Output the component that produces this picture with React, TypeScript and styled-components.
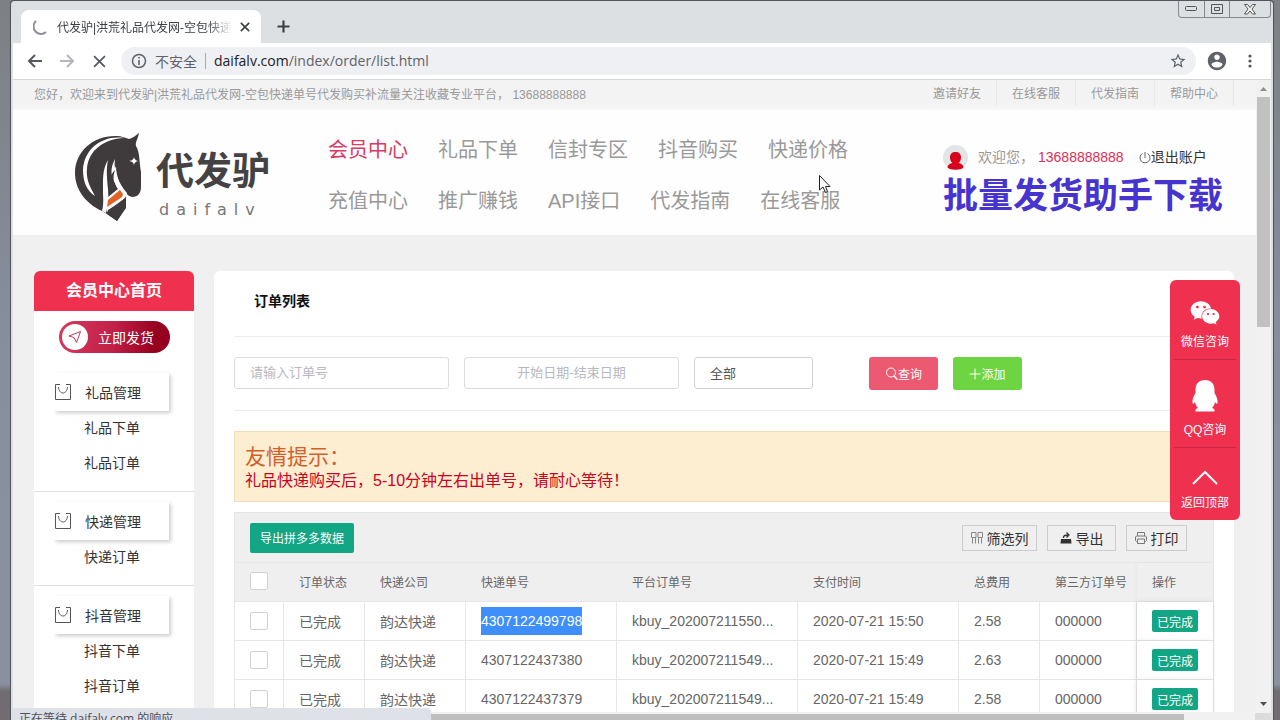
import React from "react";
import styled, { createGlobalStyle } from "styled-components";
import { FaWeixin } from "react-icons/fa";

const sans = `"Liberation Sans", "Noto Sans CJK SC", sans-serif`;
const ui = `"Open Sans", "Noto Sans CJK SC", sans-serif`;

const Global = createGlobalStyle`
  *, *::before, *::after { box-sizing: border-box; }
  html, body, #root { height: 100%; }
  body { margin: 0; font-family: ${sans}; font-size: 14px; color: #666; overflow: hidden; }
  a { color: inherit; text-decoration: none; }
  button, input, select { font-family: inherit; margin: 0; }
  button { cursor: pointer; padding: 0; border: 0; background: none; color: inherit; }
  h1, h2, p, ul { margin: 0; padding: 0; list-style: none; font-weight: normal; }
  svg { display: block; flex: none; }
`;

const Desktop = styled.div`
  height: 100%;
  padding: 1px 6px 0 10px;
  background: linear-gradient(180deg, #7d8084 0, #878f9f 50%, #8a90a0 95%, #706c72 96%);
`;

const BrowserWindow = styled.div`
  position: relative;
  height: 100%;
  display: flex;
  flex-direction: column;
  border: solid #4f5259;
  border-width: 0 1px;
  border-radius: 4px 4px 0 0;
  padding: 0 2px;
  background: #dde0e3;
  box-shadow: 0 -1px 0 #55555b;
  overflow: hidden;
`;

const TitleBar = styled.div`
  flex: none;
  height: 42px;
  display: flex;
  align-items: flex-end;
  padding-left: 8px;
`;

const Tab = styled.div`
  width: 240px;
  height: 33px;
  display: flex;
  align-items: center;
  gap: 8px;
  padding: 0 11px 0 12px;
  border-radius: 8px 8px 0 0;
  background: #fff;
  color: #3c4043;
  font-size: 12px;
`;

const TabTitle = styled.span`
  flex: 1;
  white-space: nowrap;
  mask-image: linear-gradient(90deg, #000 86%, transparent);
`;

const NewTab = styled.button`
  width: 24px;
  height: 33px;
  margin-left: 10px;
  display: grid;
  place-items: center;
  color: #3c4043;
`;

const WindowButtons = styled.div`
  display: flex;
  align-self: flex-start;
  height: 17px;
  margin-left: auto;
  border: 1px solid #85888c;
  border-top: 0;
  border-radius: 0 0 4px 4px;
`;

const WindowButton = styled.button<{ $wide?: boolean }>`
  width: ${(p) => (p.$wide ? 41 : 25)}px;
  display: grid;
  place-items: center;
  & + & { border-left: 1px solid #85888c; }
`;

const ToolBar = styled.div`
  flex: none;
  height: 37px;
  display: flex;
  align-items: center;
  gap: 12px;
  padding: 0 11px 0 12px;
  background: #fff;
  border-bottom: 1px solid #d6d7da;
  color: #5f6368;
`;

const ToolButton = styled.button<{ $faint?: boolean }>`
  width: 20px;
  height: 20px;
  display: grid;
  place-items: center;
  color: ${(p) => (p.$faint ? "#b4b6b9" : "#55585c")};
`;

const AddressBar = styled.div`
  flex: 1;
  height: 28px;
  display: flex;
  align-items: center;
  gap: 8px;
  margin-right: -2px;
  padding: 0 9px 0 10px;
  border-radius: 14px;
  background: #eff0f4;
  font-size: 14px;
`;

const Address = styled.div`
  flex: 1;
  padding-left: 8px;
  border-left: 1px solid #a9abaf;
  font-family: ${ui};
  line-height: 16px;
  color: #5f6368;
  b { font-weight: normal; color: #202124; }
`;

const View = styled.div`
  position: relative;
  flex: 1;
  min-height: 0;
  display: flex;
`;

const Page = styled.div`
  flex: 1;
  min-width: 0;
  overflow: hidden;
  background: #f0f0f0;
`;

const ScrollTrack = styled.div`
  width: 15px;
  flex: none;
  display: flex;
  flex-direction: column;
  align-items: center;
  justify-content: space-between;
  padding: 7px 0 5px;
  background: #f1f1f1;
`;

const ScrollThumb = styled.div`
  width: 13px;
  height: 230px;
  margin: 5px 0 auto;
  background: #c1c1c1;
`;

const BottomTrack = styled.div`
  flex: none;
  height: 8px;
  display: flex;
  padding-top: 1px;
  background: #f1f1f1;
`;

const BottomThumb = styled.div`
  flex: 1;
  margin: 1px 71px 0 13px;
  background: #bfbfbf;
`;

const Corner = styled.div`
  width: 16px;
  background: #dcdcdc;
`;

const TopBar = styled.div`
  height: 30px;
  display: flex;
  align-items: center;
  justify-content: space-between;
  padding: 0 22px 0 21px;
  background: linear-gradient(180deg, #f3f3f3 0, #f3f3f3 80%, #f8f8f8 100%);
  color: #999;
  font-size: 12px;
  line-height: 28px;
  white-space: pre;
`;

const TopLinks = styled.nav`
  display: flex;
  height: 26px;
  align-self: flex-start;
  a { padding: 0 15px; border-right: 1px solid #e8e8e8; }
`;

const Header = styled.header`
  height: 125px;
  display: flex;
  align-items: flex-start;
  padding: 0 33px 0 62px;
  background: #fefefe;
`;

const Logo = styled.a`
  display: flex;
  width: 193px;
  gap: 14px;
  padding-top: 22px;
  color: #454243;
`;

const LogoText = styled.span`
  display: flex;
  flex-direction: column;
  font-size: 38px;
  line-height: 38px;
  font-weight: bold;
  padding-top: 20px;
  white-space: nowrap;
`;

const LogoLatin = styled.span`
  padding-left: 3px;
  font-family: "DejaVu Sans", sans-serif;
  font-weight: normal;
  font-size: 16px;
  line-height: 40px;
  letter-spacing: 7px;
  color: #777;
`;

const Nav = styled.nav`
  margin-left: 60px;
  padding-top: 13px;
`;

const NavRow = styled.div`
  display: flex;
  gap: 30px;
  height: 51px;
  align-items: center;
  white-space: nowrap;
`;

const NavLink = styled.a<{ $active?: boolean }>`
  font-size: 20px;
  color: ${(p) => (p.$active ? "#d83a62" : "#999")};
`;

const Account = styled.div`
  margin-left: auto;
  padding-top: 35px;
  white-space: nowrap;
`;

const Welcome = styled.div`
  display: flex;
  align-items: center;
  height: 25px;
  line-height: 23px;
  color: #999;
  a { display: flex; align-items: center; margin-left: 15px; color: #333; }
`;

const Greeting = styled.span`
  margin: 0 4px 0 10px;
`;

const Phone = styled.span`
  color: #dc3056;
`;

const Download = styled.a`
  display: block;
  color: #4634d0;
  font-size: 35px;
  font-weight: bold;
  line-height: 52px;
`;

const Columns = styled.div`
  display: flex;
  align-items: stretch;
  gap: 20px;
  padding: 36px 22px 0 21px;
`;

const Sidebar = styled.aside`
  width: 160px;
  flex: none;
  background: #fff;
  border-radius: 6px 6px 0 0;
  overflow: hidden;
  color: #333;
`;

const SideTitle = styled.h2`
  height: 40px;
  background: #f0304f;
  color: #fff;
  font-size: 16px;
  font-weight: bold;
  line-height: 40px;
  text-align: center;
`;

const ShipButton = styled.button`
  display: flex;
  align-items: center;
  gap: 10px;
  width: 111px;
  height: 32px;
  margin: 10px 25px;
  padding: 0 3px;
  border-radius: 16px;
  background: linear-gradient(100deg, #d83a60 0, #c01f46 50%, #96001f 85%);
  color: #fff;
  font-size: 14px;
`;

const Round = styled.span`
  width: 26px;
  height: 26px;
  border-radius: 50%;
  display: grid;
  place-items: center;
  background: #fff;
`;

const SideGroup = styled.section`
  padding: 10px 0;
  & + & { border-top: 1px solid #dfe0e1; }
`;

const GroupHead = styled.h2`
  display: flex;
  align-items: center;
  gap: 14px;
  height: 38px;
  margin: 0 25px 0 20px;
  font-size: 14px;
  background: #fff;
  box-shadow: 2px 2px 4px rgba(0, 0, 0, 0.2);
  clip-path: inset(-4px -8px -8px 0);
`;

const SideLink = styled.a`
  display: block;
  height: 35px;
  padding-left: 50px;
  line-height: 35px;
`;

const Main = styled.main`
  flex: 1;
  min-width: 0;
  padding: 0 20px;
  background: #fff;
  border-radius: 6px 6px 0 0;
`;

const PanelTitle = styled.h1`
  height: 66px;
  padding-left: 20px;
  border-bottom: 1px solid #eee;
  color: #111;
  font-size: 14px;
  font-weight: bold;
  line-height: 60px;
`;

const Filters = styled.form`
  display: flex;
  align-items: flex-start;
  gap: 15px;
  padding: 20px 0;
  border-bottom: 1px solid #eee;
`;

const Field = styled.input<{ $center?: boolean }>`
  width: 215px;
  height: 32px;
  padding: 0 15px 2px;
  border: 1px solid #dcdcdc;
  border-radius: 3px;
  background: #fff;
  font-size: 13px;
  text-align: ${(p) => (p.$center ? "center" : "left")};
  &::placeholder { color: #b8b8c0; }
`;

const Choice = styled.select`
  appearance: none;
  width: 119px;
  height: 32px;
  padding: 0 15px;
  border: 1px solid #d2d2d2;
  border-radius: 3px;
  background: #fff;
  color: #555;
  font-size: 13px;
`;

const Actions = styled.div`
  display: flex;
  gap: 15px;
  margin-left: 41px;
`;

const ActionButton = styled.button<{ $tone: string }>`
  display: flex;
  align-items: center;
  justify-content: center;
  width: 69px;
  height: 33px;
  border-radius: 3px;
  background: ${(p) => p.$tone};
  color: #fff;
  font-size: 12px;
`;

const Notice = styled.section`
  margin: 20px 0 10px;
  padding: 12px 10px 9px;
  border: 1px solid #f1dcb8;
  background: #fdedd1;
  color: #cc0022;
  font-size: 16px;
  line-height: 22px;
`;

const NoticeTitle = styled.h2`
  color: #d0602c;
  font-size: 21px;
  line-height: 26px;
`;

const TableBox = styled.div`
  border: 1px solid #e4e4e4;
`;

const TableTools = styled.div`
  display: flex;
  align-items: center;
  gap: 10px;
  height: 50px;
  padding: 0 26px 0 15px;
  background: #f0eff0;
  border-bottom: 1px solid #e8e8e8;
`;

const ExportButton = styled.button`
  width: 104px;
  height: 30px;
  margin-right: auto;
  border-radius: 2px;
  background: #12a685;
  color: #fff;
  font-size: 12px;
`;

const ToolChip = styled.button<{ $w: number }>`
  display: flex;
  align-items: center;
  justify-content: center;
  gap: 4px;
  width: ${(p) => p.$w}px;
  height: 26px;
  border: 1px solid #ccc;
  color: #333;
  font-size: 14px;
`;

const Table = styled.table`
  width: 100%;
  table-layout: fixed;
  border-collapse: separate;
  border-spacing: 0;
`;

const Cell = styled.td`
  height: 39px;
  padding: 0 15px;
  border-bottom: 1px solid #e6e6e6;
  border-right: 1px solid #e6e6e6;
  background: #fff;
  white-space: nowrap;
  text-align: left;
  font-size: 14px;
  &:last-child { border-right: 0; box-shadow: -1px 0 5px rgba(0, 0, 0, 0.1); }
`;

const HeadCell = styled(Cell)`
  padding-bottom: 2px;
  font-size: 12px;
  font-weight: normal;
  background: #f0eff0;
  border-right-color: #f0eff0;
  &:last-child { box-shadow: -1px 0 5px rgba(0, 0, 0, 0.04); }
`;

const Check = styled.input`
  appearance: none;
  display: block;
  width: 18px;
  height: 18px;
  margin: 0;
  border: 1px solid #d2d2d2;
  border-radius: 2px;
  background: #fff;
`;

const Selected = styled.span`
  display: inline-block;
  line-height: 28px;
  vertical-align: middle;
  background: #3e8ffb;
  color: #fff;
`;

const Done = styled.button`
  display: block;
  width: 46px;
  height: 22px;
  border-radius: 2px;
  background: #12a685;
  color: #fff;
  font-size: 12px;
`;

const Floating = styled.nav`
  position: absolute;
  top: 200px;
  right: 31px;
  width: 70px;
  padding: 0 4px;
  border-radius: 6px;
  background: #f0304f;
`;

const FloatLink = styled.a<{ $h: number; $gap: number }>`
  display: flex;
  flex-direction: column;
  align-items: center;
  justify-content: flex-end;
  gap: ${(p) => p.$gap}px;
  height: ${(p) => p.$h}px;
  padding-bottom: 8px;
  color: #fff;
  font-size: 12px;
  line-height: 18px;
  white-space: nowrap;
  & + & { border-top: 1px solid #c92843; }
`;

const StatusBubble = styled.div`
  position: absolute;
  left: 2px;
  bottom: 0;
  width: 418px;
  height: 12px;
  padding: 1px 6px;
  border-radius: 0 4px 0 0;
  background: #dfe1e8;
  color: #4d5056;
  font-family: ${ui};
  font-size: 12px;
  line-height: 20px;
  white-space: nowrap;
`;

const Pointer = styled.svg`
  position: absolute;
  left: 808px;
  top: 174px;
`;

const line = { fill: "none", stroke: "currentColor" } as const;

const Horse = () => (
  <svg width="67" height="90" viewBox="0 0 67 90" aria-hidden="true">
    <path fill="#3f3b3c" d="M64 1C63 7 60 10 61 14C65 20 64 30 66 40L66 55C66 61 63 65 57 65C53 64 51 61 47 57C44 50 41 42 41 34C37 42 39 49 42 57L51 65L51 75L42 89L32 82L27 79C10 71 0 57 0 41C0 19 19 3 42 4C47 4 50 6 54 7C58 6 61 3 64 1Z" />
    <path fill="#fff" d="M49 6C27 3 9 17 8 38C8 50 12 59 20 64C14 53 11 47 12 36C14 18 29 7 49 6Z" />
    <path fill="#fff" d="M33 28C27 38 28 49 28 58C28 66 29 72 27 79L31 81C33 73 34 66 33 57C32 47 31 37 33 28Z" />
    <path fill="#fff" d="M40 27C33 40 38 49 43 56L31 67L32 80L50 66L52 61C44 52 38 39 40 27Z" />
    <path fill="#3f3b3c" d="M40 38C37 46 39 52 43 57L34 64C33 52 34 44 40 38Z" />
    <path fill="#e16324" d="M45 58L48 62L47 65L32 75L33 68Z" />
    <path fill="#3f3b3c" d="M33 78L50 67L51 76L42 89L32 82Z" />
    <circle fill="#fff" cx="59" cy="29" r="2" />
    <path fill="#fff" d="M59 25l1 3 3 1-3 1-1 3-1-3-4-1 4-1z" />
  </svg>
);

const Spinner = () => (
  <svg width="16" height="16" viewBox="0 0 16 16" aria-hidden="true">
    <path {...line} stroke="#8d9094" strokeWidth="2" d="M3 2A7 7 0 0 0 13 13" />
  </svg>
);
const Cross = ({ size, weight }: { size: number; weight: number }) => (
  <svg width={size} height={size} viewBox="0 0 12 12" aria-hidden="true">
    <path {...line} strokeWidth={weight} d="M1 1L11 11M11 1L1 11" />
  </svg>
);
const Arrow = ({ flip }: { flip?: boolean }) => (
  <svg width="16" height="16" viewBox="0 0 16 16" aria-hidden="true">
    <path {...line} strokeWidth="2" d={flip ? "M1 8H14M8 2L14 8L8 14" : "M15 8H2M8 2L2 8L8 14"} />
  </svg>
);
const Info = () => (
  <svg width="16" height="16" viewBox="0 0 16 16" aria-hidden="true">
    <circle {...line} strokeWidth="1.5" cx="8" cy="8" r="6.5" />
    <path {...line} strokeWidth="1.6" d="M8 7V12M8 4V5.6" />
  </svg>
);
const Star = () => (
  <svg width="18" height="18" viewBox="0 0 24 24" aria-hidden="true">
    <path fill="currentColor" d="M22 9.24l-7.19-.62L12 2 9.19 8.63 2 9.24l5.46 4.73L5.82 21 12 17.27 18.18 21l-1.63-7.03L22 9.24zM12 15.4l-3.76 2.27 1-4.28-3.32-2.88 4.38-.38L12 6.1l1.71 4.04 4.38.38-3.32 2.88 1 4.28L12 15.4z" />
  </svg>
);
const Profile = () => (
  <svg width="22" height="22" viewBox="0 0 24 24" aria-hidden="true">
    <path fill="currentColor" d="M12 2C6.48 2 2 6.48 2 12s4.48 10 10 10 10-4.48 10-10S17.52 2 12 2zm0 3c1.66 0 3 1.34 3 3s-1.34 3-3 3-3-1.34-3-3 1.34-3 3-3zm0 14.2c-2.5 0-4.71-1.28-6-3.22.03-1.99 4-3.08 6-3.08 1.99 0 5.97 1.09 6 3.08-1.29 1.94-3.5 3.22-6 3.22z" />
  </svg>
);
const Dots = () => (
  <svg width="4" height="16" viewBox="0 0 4 16" aria-hidden="true">
    <g fill="currentColor"><circle cx="2" cy="3" r="1.6" /><circle cx="2" cy="8" r="1.6" /><circle cx="2" cy="13" r="1.6" /></g>
  </svg>
);
const Avatar = () => (
  <svg width="25" height="25" viewBox="0 0 25 25" aria-hidden="true">
    <circle cx="12.5" cy="12.5" r="12.5" fill="#e2e5e5" />
    <path fill="#d8001b" d="M12.5 7C16 7 18 9 18 12.5C18 15 17 17 15.500 18C18 18.500 20.500 20 20.500 22.500C18 25.500 7 25.500 4.500 22.500C4.500 20 7 18.500 9.500 18C8 17 7 15 7 12.500C7 9 9 7 12.500 7Z" />
  </svg>
);
const Power = () => (
  <svg width="12" height="14" viewBox="0 0 12 14" aria-hidden="true">
    <path {...line} stroke="#666" d="M3.500 2.500A5 5 0 1 0 8.500 2.500M6 1V7" />
  </svg>
);
const Plane = () => (
  <svg width="14" height="14" viewBox="0 0 14 14" aria-hidden="true">
    <path {...line} stroke="#c03a5c" strokeLinejoin="round" d="M12.500 1.500L1 6L6 7.500L8.500 12.500Z" />
  </svg>
);
const Bag = () => (
  <svg width="17" height="17" viewBox="0 0 17 17" aria-hidden="true">
    <path {...line} stroke="#555" d="M6 0.500H1.500V15.500H16.500V0.500H12M4.500 3C5 11 13 11 13.500 3" />
  </svg>
);
const Lens = () => (
  <svg width="13" height="13" viewBox="0 0 13 13" aria-hidden="true">
    <circle {...line} cx="6" cy="5.500" r="4.500" />
    <path {...line} strokeWidth="1.500" d="M9 9L12.500 12.500" />
  </svg>
);
const Plus = ({ size, weight }: { size: number; weight: number }) => (
  <svg width={size} height={size} viewBox="0 0 12 12" aria-hidden="true">
    <path {...line} strokeWidth={weight} d="M6 0.500V11.500M0.500 6H11.500" />
  </svg>
);
const ColumnsIcon = () => (
  <svg width="12" height="12" viewBox="0 0 12 12" aria-hidden="true">
    <path {...line} stroke="#888" d="M0.500 0.500H5V5.500H0.500ZM7 0.500H11.500V5.500H7ZM1.500 5V11.500M4.500 5V11.500M7.500 5V11.500M10.500 5V11.500" />
  </svg>
);
const ExportIcon = () => (
  <svg width="12" height="12" viewBox="0 0 12 12" aria-hidden="true">
    <path fill="#333" d="M1 7H11L11.500 11.500H0.500Z" />
    <path {...line} stroke="#333" strokeWidth="1.300" d="M3.500 6V5C4 3 6 3 8 3M6.500 0.500L9 3L6.500 5.500" />
  </svg>
);
const PrintIcon = () => (
  <svg width="12" height="12" viewBox="0 0 12 12" aria-hidden="true">
    <path {...line} stroke="#777" d="M2.500 4V0.500H9.500V4M2.500 9.500H1.500L0.500 8.500V5L1.500 4H10.500L11.500 5V8.500L10.500 9.500H9.500M2.500 7H9.500V11.500H2.500Z" />
  </svg>
);
const Penguin = () => (
  <svg width="26" height="32" viewBox="0 0 26 32" aria-hidden="true">
    <path fill="#fff" d="M13 0C19 0 22.500 4 22.500 9.500V13C24.500 16 26 20 25.500 23C25 24.500 24 23.500 23 22C22.500 24.500 21.500 26.500 20 28C22 28.500 23 29.500 22.500 31.500H3.500C3 29.500 4 28.500 6 28C4.500 26.500 3.500 24.500 3 22C2 23.500 1 24.500 0.500 23C0 20 1.500 16 3.500 13V9.500C3.500 4 7 0 13 0Z" />
  </svg>
);
const Up = () => (
  <svg width="26" height="15" viewBox="0 0 26 15" aria-hidden="true">
    <path {...line} strokeWidth="2" d="M1 14L13 2L25 14" />
  </svg>
);
const Triangle = ({ down }: { down?: boolean }) => (
  <svg width="7" height="5" viewBox="0 0 7 5" aria-hidden="true">
    <path fill={down ? "#505050" : "#8f8f8f"} d={down ? "M0 0H7L3.500 4Z" : "M0 4H7L3.500 0Z"} />
  </svg>
);

const navRows = [
  ["会员中心", "礼品下单", "信封专区", "抖音购买", "快递价格"],
  ["充值中心", "推广赚钱", "API接口", "代发指南", "在线客服"],
];
const groups = [
  { name: "礼品管理", items: ["礼品下单", "礼品订单"] },
  { name: "快递管理", items: ["快递订单"] },
  { name: "抖音管理", items: ["抖音下单", "抖音订单"] },
];
const heads = ["订单状态", "快递公司", "快递单号", "平台订单号", "支付时间", "总费用", "第三方订单号", "操作"];
const widths = [49, 81, 101, 151, undefined, 161, 81, 97, 76];
const orders = [
  { no: "4307122499798", ref: "kbuy_202007211550...", time: "2020-07-21 15:50", fee: "2.58" },
  { no: "4307122437380", ref: "kbuy_202007211549...", time: "2020-07-21 15:49", fee: "2.63" },
  { no: "4307122437379", ref: "kbuy_202007211549...", time: "2020-07-21 15:49", fee: "2.58" },
];

export default function App() {
  return (
    <Desktop>
      <Global />
      <BrowserWindow>
        <TitleBar>
          <Tab>
            <Spinner />
            <TabTitle>代发驴|洪荒礼品代发网-空包快递</TabTitle>
            <button aria-label="关闭标签页"><Cross size={10} weight={2} /></button>
          </Tab>
          <NewTab aria-label="新标签页"><Plus size={13} weight={2} /></NewTab>
          <WindowButtons>
            <WindowButton aria-label="最小化">
              <svg width="13" height="6" viewBox="0 0 13 6"><rect {...line} stroke="#555" x="0.500" y="0.500" width="11" height="4" rx="1" /></svg>
            </WindowButton>
            <WindowButton aria-label="最大化">
              <svg width="13" height="11" viewBox="0 0 13 11"><path {...line} stroke="#555" d="M0.500 0.500H11.500V9.500H0.500ZM3.500 3.500H8.500V6.500H3.500Z" /></svg>
            </WindowButton>
            <WindowButton $wide aria-label="关闭">
              <svg width="12" height="11" viewBox="0 0 12 11"><path fill="#f2f2f2" stroke="#555" d="M0.500 0.500H3.500L6 3.500L8.500 0.500H11.500L8 5L11.500 10H8.500L6 7L3.500 10H0.500L4 5Z" /></svg>
            </WindowButton>
          </WindowButtons>
        </TitleBar>
        <ToolBar>
          <ToolButton aria-label="后退"><Arrow /></ToolButton>
          <ToolButton aria-label="前进" $faint><Arrow flip /></ToolButton>
          <ToolButton aria-label="停止"><Cross size={13} weight={1.6} /></ToolButton>
          <AddressBar>
            <Info />
            <span>不安全</span>
            <Address><b>daifalv.com</b>/index/order/list.html</Address>
            <Star />
          </AddressBar>
          <Profile />
          <ToolButton aria-label="菜单"><Dots /></ToolButton>
        </ToolBar>

        <View>
          <Page>
            <TopBar>
              <span>您好，欢迎来到代发驴|洪荒礼品代发网-空包快递单号代发购买补流量关注收藏专业平台， 13688888888</span>
              <TopLinks>
                {["邀请好友", "在线客服", "代发指南", "帮助中心"].map((t) => <a href="#" key={t}>{t}</a>)}
              </TopLinks>
            </TopBar>
            <Header>
              <Logo href="#">
                <Horse />
                <LogoText>
                  代发驴
                  <LogoLatin>daifalv</LogoLatin>
                </LogoText>
              </Logo>
              <Nav>
                {navRows.map((row, r) => (
                  <NavRow key={r}>
                    {row.map((t) => <NavLink href="#" key={t} $active={t === "会员中心"}>{t}</NavLink>)}
                  </NavRow>
                ))}
              </Nav>
              <Account>
                <Welcome>
                  <Avatar />
                  <Greeting>欢迎您，</Greeting>
                  <Phone>13688888888</Phone>
                  <a href="#"><Power />退出账户</a>
                </Welcome>
                <Download href="#">批量发货助手下载</Download>
              </Account>
            </Header>

            <Columns>
              <Sidebar>
                <SideTitle>会员中心首页</SideTitle>
                <ShipButton><Round><Plane /></Round>立即发货</ShipButton>
                <div>
                  {groups.map((g) => (
                    <SideGroup key={g.name}>
                      <GroupHead><Bag />{g.name}</GroupHead>
                      {g.items.map((t) => <SideLink href="#" key={t}>{t}</SideLink>)}
                    </SideGroup>
                  ))}
                </div>
              </Sidebar>

              <Main>
                <PanelTitle>订单列表</PanelTitle>
                <Filters onSubmit={(e) => e.preventDefault()}>
                  <Field aria-label="订单号" placeholder="请输入订单号" />
                  <Field aria-label="日期" placeholder="开始日期-结束日期" $center />
                  <Choice aria-label="状态"><option>全部</option></Choice>
                  <Actions>
                    <ActionButton $tone="#eb5a70"><Lens />查询</ActionButton>
                    <ActionButton type="button" $tone="#6dd442"><Plus size={12} weight={1} />添加</ActionButton>
                  </Actions>
                </Filters>
                <Notice>
                  <NoticeTitle>友情提示：</NoticeTitle>
                  <p>礼品快递购买后，5-10分钟左右出单号，请耐心等待！</p>
                </Notice>
                <TableBox>
                  <TableTools>
                    <ExportButton>导出拼多多数据</ExportButton>
                    <ToolChip $w={75}><ColumnsIcon />筛选列</ToolChip>
                    <ToolChip $w={69}><ExportIcon />导出</ToolChip>
                    <ToolChip $w={61}><PrintIcon />打印</ToolChip>
                  </TableTools>
                  <Table>
                    <colgroup>{widths.map((w, i) => <col key={i} width={w} />)}</colgroup>
                    <thead>
                      <tr>
                        <HeadCell as="th"><Check type="checkbox" aria-label="全选" /></HeadCell>
                        {heads.map((h) => <HeadCell as="th" key={h}>{h}</HeadCell>)}
                      </tr>
                    </thead>
                    <tbody>
                      {orders.map((o, i) => (
                        <tr key={o.no}>
                          <Cell><Check type="checkbox" aria-label={o.no} /></Cell>
                          <Cell>已完成</Cell>
                          <Cell>韵达快递</Cell>
                          <Cell>{i === 0 ? <Selected>{o.no}</Selected> : o.no}</Cell>
                          <Cell>{o.ref}</Cell>
                          <Cell>{o.time}</Cell>
                          <Cell>{o.fee}</Cell>
                          <Cell>000000</Cell>
                          <Cell><Done>已完成</Done></Cell>
                        </tr>
                      ))}
                    </tbody>
                  </Table>
                </TableBox>
              </Main>
            </Columns>
          </Page>
          <ScrollTrack>
            <Triangle />
            <ScrollThumb />
            <Triangle down />
          </ScrollTrack>
          <Floating>
            <FloatLink href="#" $h={79} $gap={5}><FaWeixin size={30} />微信咨询</FloatLink>
            <FloatLink href="#" $h={88} $gap={9}><Penguin />QQ咨询</FloatLink>
            <FloatLink href="#" $h={73} $gap={9}><Up />返回顶部</FloatLink>
          </Floating>
        </View>
        <BottomTrack>
          <BottomThumb />
          <Corner />
        </BottomTrack>
        <StatusBubble>正在等待 daifalv.com 的响应</StatusBubble>
        <Pointer width="12" height="19" viewBox="0 0 12 19" aria-hidden="true">
          <path fill="#fff" stroke="#222" d="M0.500 0.500V15L4 12L6.500 17.500L8.500 16.500L6.500 11.500H11Z" />
        </Pointer>
      </BrowserWindow>
    </Desktop>
  );
}
